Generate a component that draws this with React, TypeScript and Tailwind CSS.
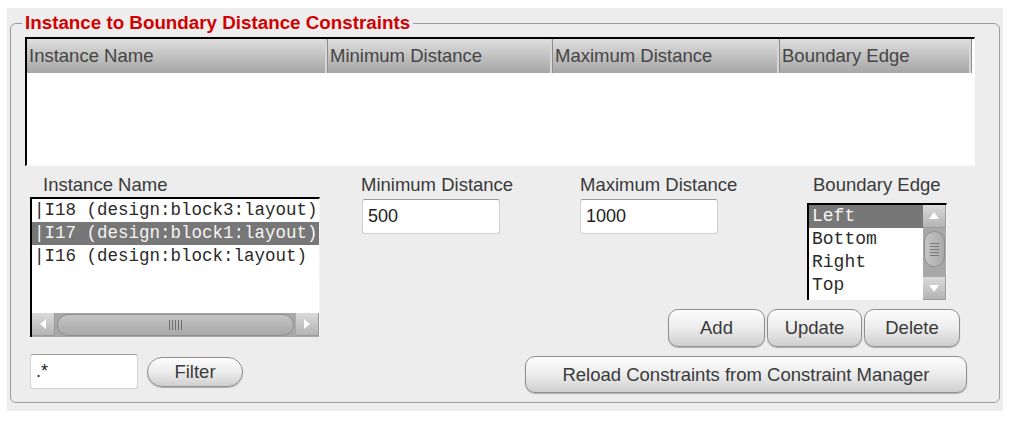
import React from "react";

const SANS = "font-['Liberation_Sans',Arial,sans-serif]";
const MONO = "font-['Liberation_Mono','Courier_New',monospace]";

const INSTANCES = [
  "|I18 (design:block3:layout)",
  "|I17 (design:block1:layout)",
  "|I16 (design:block:layout)",
];
const EDGES = ["Left", "Bottom", "Right", "Top"];

const HEADERS = [
  { label: "Instance Name", w: "w-[301px]" },
  { label: "Minimum Distance", w: "w-[225px]" },
  { label: "Maximum Distance", w: "w-[227px]" },
  { label: "Boundary Edge", w: "w-[192px]" },
];

const Arrow = ({ dir }: { dir: "left" | "right" | "up" | "down" }) => {
  const pts = {
    left: "3,6 9,1 9,11",
    right: "9,6 3,1 3,11",
    up: "6,2 11,9 1,9",
    down: "6,10 11,3 1,3",
  }[dir];
  return (
    <svg width="12" height="12" viewBox="0 0 12 12">
      <polygon points={pts} fill="#ffffff" />
    </svg>
  );
};

const ScrollButton = ({ dir }: { dir: "left" | "right" | "up" | "down" }) => (
  <div className="w-[23px] h-[23px] shrink-0 flex items-center justify-center bg-gradient-to-b from-[#dadada] to-[#b4b4b4] border-b border-r border-[#9a9a9a]">
    <Arrow dir={dir} />
  </div>
);

const Button = ({ label, className }: { label: string; className: string }) => (
  <button
    className={`${className} ${SANS} text-[18.5px] text-[#3a3a3a] bg-gradient-to-b from-[#fdfdfd] via-[#ececec] to-[#cfcfcf] border border-[#8e8e8e] shadow-[inset_0_1px_0_#ffffff,0_1px_1px_#b0b0b0] flex items-center justify-center`}
  >
    {label}
  </button>
);

const TextField = ({ value, className }: { value: string; className: string }) => (
  <input
    readOnly
    value={value}
    className={`${className} ${SANS} bg-white text-[18px] text-[#222] pl-[5px] rounded-[3px] border border-[#d0d0d0] border-t-[#9c9c9c] outline-none`}
  />
);

export default function App() {
  return (
    <div className={`w-[1013px] h-[421px] bg-white pt-[8px] pl-[7px] ${SANS}`}>
      <div className="w-[996px] h-[403px] bg-[#ededed] pt-[5px] pl-[3px]">
        <fieldset className="w-[990px] h-[390px] border border-[#9c9c9c] rounded-[6px] px-[14px]">
          <legend className="-ml-[3px] px-[3px] text-[18.8px] leading-[20px] font-bold text-[#d20000]">
            Instance to Boundary Distance Constraints
          </legend>

          {/* constraints table */}
          <div className="mt-[4px] w-[950px] h-[129px] bg-white border-t-2 border-l-2 border-t-black border-l-black border-r border-b border-r-[#fafafa] border-b-[#fafafa]">
            <div className="flex h-[34px] w-[945px] bg-gradient-to-b from-[#dedede] to-[#a6a6a6]">
              {HEADERS.map((h, i) => (
                <div
                  key={i}
                  className={`${h.w} h-full flex items-center pl-[2px] text-[18.5px] text-[#454545] border-r border-r-[#8c8c8c] shadow-[inset_-2px_0_0_#d6d6d6]`}
                >
                  {h.label}
                </div>
              ))}
            </div>
          </div>

          <div className="flex mt-[9px]">
            {/* instance picker */}
            <div className="ml-[5px] w-[290px]">
              <div className="pl-[13px] h-[20px] leading-[20px] text-[18.5px] text-[#3a3a3a]">
                Instance Name
              </div>
              <div className="mt-[2px] h-[140px] bg-white border-t-2 border-l-2 border-black border-r border-r-[#f4f4f4] flex flex-col">
                <div className={`flex-1 ${MONO} text-[17.5px]`}>
                  {INSTANCES.map((n, i) => (
                    <div
                      key={i}
                      className={`h-[23px] leading-[23px] pl-[2px] whitespace-pre ${
                        i === 1 ? "bg-[#777777] text-[#f4f4f4]" : "text-[#2a2a2a]"
                      }`}
                    >
                      {n}
                    </div>
                  ))}
                </div>
                <div className="h-[24px] flex bg-[#a8a8a8]">
                  <ScrollButton dir="left" />
                  <div className="flex-1 px-[2px] py-[1px]">
                    <div className="h-full rounded-full bg-gradient-to-b from-[#c4c4c4] to-[#a9a9a9] border border-[#8e8e8e] flex items-center justify-center gap-[2px]">
                      {[0, 1, 2, 3, 4].map((k) => (
                        <div key={k} className="w-px h-[10px] bg-[#6e6e6e]" />
                      ))}
                    </div>
                  </div>
                  <ScrollButton dir="right" />
                </div>
              </div>
              <div className="mt-[17px] flex items-center">
                <TextField value=".*" className="w-[108px] h-[35px]" />
                <Button label="Filter" className="ml-[9px] w-[96px] h-[30px] rounded-full" />
              </div>
            </div>

            {/* distance / edge fields and actions */}
            <div className="ml-[41px] w-[606px]">
              <div className="flex h-[125px]">
                <div className="w-[219px]">
                  <div className="h-[20px] leading-[20px] text-[18.5px] text-[#3a3a3a]">Minimum Distance</div>
                  <TextField value="500" className="mt-[4px] ml-[1px] w-[138px] h-[35px]" />
                </div>
                <div className="w-[227px]">
                  <div className="h-[20px] leading-[20px] text-[18.5px] text-[#3a3a3a]">Maximum Distance</div>
                  <TextField value="1000" className="mt-[4px] w-[138px] h-[35px]" />
                </div>
                <div className="w-[140px]">
                  <div className="h-[20px] leading-[20px] text-[18.5px] text-[#3a3a3a] whitespace-nowrap pl-[6px]">
                    Boundary Edge
                  </div>
                  <div className="mt-[8px] h-[97px] bg-white border-t-2 border-l-2 border-black border-r border-r-[#f4f4f4] flex">
                    <div className={`flex-1 ${MONO} text-[18px]`}>
                      {EDGES.map((e, i) => (
                        <div
                          key={i}
                          className={`h-[23px] leading-[23px] pl-[3px] ${
                            i === 0 ? "bg-[#777777] text-[#f4f4f4]" : "text-[#2a2a2a]"
                          }`}
                        >
                          {e}
                        </div>
                      ))}
                    </div>
                    <div className="w-[23px] flex flex-col bg-[#a8a8a8]">
                      <ScrollButton dir="up" />
                      <div className="flex-1 px-[1px] py-[3px]">
                        <div className="h-[36px] rounded-full bg-gradient-to-r from-[#c6c6c6] to-[#a9a9a9] border border-[#8e8e8e] flex flex-col items-center justify-center gap-[2px]">
                          {[0, 1, 2, 3, 4].map((k) => (
                            <div key={k} className="h-px w-[9px] bg-[#7a7a7a]" />
                          ))}
                        </div>
                      </div>
                      <ScrollButton dir="down" />
                    </div>
                  </div>
                </div>
              </div>

              <div className="mt-[9px] flex justify-end gap-[2px] pr-[7px]">
                <Button label="Add" className="w-[97px] h-[38px] rounded-[10px]" />
                <Button label="Update" className="w-[95px] h-[38px] rounded-[10px]" />
                <Button label="Delete" className="w-[96px] h-[38px] rounded-[10px]" />
              </div>
              <Button
                label="Reload Constraints from Constraint Manager"
                className="mt-[9px] ml-[164px] w-[442px] h-[37px] rounded-[10px]"
              />
            </div>
          </div>
        </fieldset>
      </div>
    </div>
  );
}
